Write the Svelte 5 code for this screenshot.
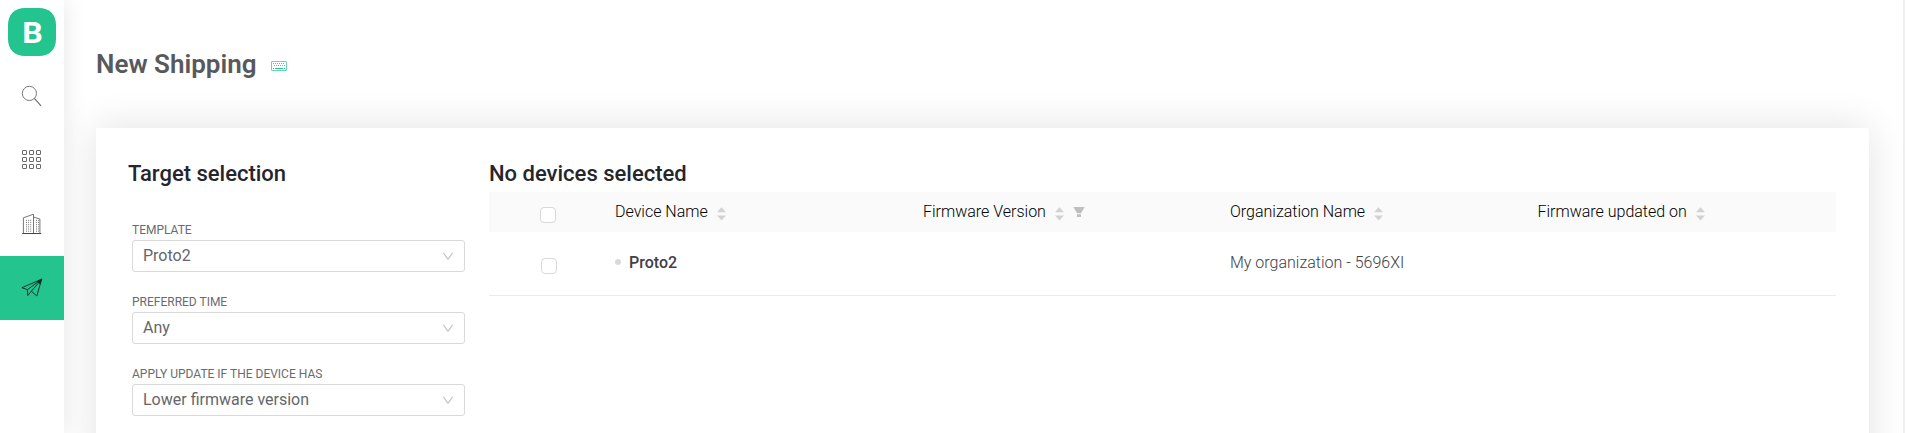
<script>
  const fields = [
    { label: 'TEMPLATE', value: 'Proto2' },
    { label: 'PREFERRED TIME', value: 'Any' },
    { label: 'APPLY UPDATE IF THE DEVICE HAS', value: 'Lower firmware version' }
  ];
  const columns = [
    { title: 'Device Name' },
    { title: 'Firmware Version', filter: true },
    { title: 'Organization Name' },
    { title: 'Firmware updated on' }
  ];
  const cells = [0, 1, 2];
  const windows = [0, 1, 2, 3, 4, 5];
</script>

<div class="page">
  <nav class="sidebar">
    <div class="item">
      <svg width="48" height="48" viewBox="0 0 48 48">
        <path d="M17 0H31C41.5 0 48 6.5 48 17V31C48 41.5 41.5 48 31 48H17C6.5 48 0 41.5 0 31V17C0 6.5 6.5 0 17 0Z" fill="#24c48e" />
        <text x="24.4" y="35.2" text-anchor="middle" textLength="20.5" lengthAdjust="spacingAndGlyphs" class="mark">B</text>
      </svg>
    </div>
    <div class="item">
      <svg width="22" height="22" viewBox="0 0 22 22" fill="none" stroke="#666" stroke-width=".9">
        <circle cx="8.4" cy="8.4" r="7.1" /><path d="M13.4 13.4 20 20.8" stroke-width="1.1" />
      </svg>
    </div>
    <div class="item">
      <svg width="20" height="20" viewBox="0 0 20 20" fill="none" stroke="#6a6a6a" stroke-width="1">
        {#each cells as r}{#each cells as c}
          <rect x={0.5 + c * 7} y={0.5 + r * 7} width="4" height="4" rx="0.4" />
        {/each}{/each}
      </svg>
    </div>
    <div class="item">
      <svg width="20" height="22" viewBox="0 0 20 22" fill="none" stroke="#666" stroke-width=".9">
        <path d="M1.4 20.5V4.8L11.5 1.2V20.5M11.5 4l6.4 2V20.5" />
        <path d="M.2 20.5H19.2" stroke-width="1" stroke="#444" />
        {#each windows as r}
          <path d="M4 {7.4 + r * 2.15}h5.5M14 {7.4 + r * 2.15}h3" stroke-dasharray="1 1.1" />
        {/each}
      </svg>
    </div>
    <div class="item active">
      <svg width="22" height="20" viewBox="0 0 22 20" fill="none" stroke="#12372b" stroke-width="1" stroke-linejoin="round">
        <path d="M20.7 1.2.9 9.7l5.5 2L20.7 1.2 15.8 18l-5.4-4.8L20.7 1.2M6.4 11.7l.4 5.8 3.6-4.3" />
        <path d="m20.9 1-4.7 2.4 2.7 2.1Z" fill="#0b211a" />
      </svg>
    </div>
  </nav>

  <main>
    <header>
      <h1>New Shipping</h1>
      <svg class="keyboard" width="16" height="10" viewBox="0 0 16 10" fill="none" stroke="#42c99d">
        <rect x=".5" y=".5" width="15" height="9" rx=".5" stroke-width=".8" />
        <path d="M2 2.5h12M3 4.5h11" stroke-dasharray="1 1" stroke-width="1" />
        <path d="M2 7.5h1M4 7.5h8M13 7.5h1" stroke-width="1" stroke="#2fbd8e" />
      </svg>
    </header>

    <section class="card">
      <aside>
        <h2>Target selection</h2>
        {#each fields as f}
          <div class="field">
            <div class="label">{f.label}</div>
            <div class="select">
              <span>{f.value}</span>
              <svg width="12" height="10" viewBox="0 0 12 10" fill="none" stroke="#c4c4c4" stroke-width="1.1"><path d="m1.3 1.8 4.7 6.4 4.7-6.4" /></svg>
            </div>
          </div>
        {/each}
      </aside>
      <div class="devices">
        <h2>No devices selected</h2>
        <div class="row head">
          <div class="check"><i></i></div>
          {#each columns as col}
            <div class="cell">
              <span>{col.title}</span>
              <svg class="sort" width="9" height="14" viewBox="0 0 9 14" fill="#d2d2d2"><path d="M0 5.2 4.5.2 9 5.2ZM0 8.5h9l-4.5 5Z" /></svg>
              {#if col.filter}
                <svg class="filter" width="12" height="11" viewBox="0 0 12 11" fill="#bfbfbf"><path d="M.4 0h11.2L8 6.2H4ZM4 7.2h4V10H4Z" /></svg>
              {/if}
            </div>
          {/each}
        </div>
        <div class="row body">
          <div class="check"><i></i></div>
          <div class="cell name"><b></b><strong>Proto2</strong></div>
          <div class="cell"></div>
          <div class="cell">My organization - 5696XI</div>
          <div class="cell"></div>
        </div>
      </div>
    </section>
  </main>
  <div class="edge"></div>
</div>

<style>
  :global(body) { background: #fff; overflow: hidden; }
  .page { display: flex; height: 433px; overflow: hidden; font: 300 16px/24px Roboto, sans-serif; color: #404145; }
  svg { display: block; flex: none; }
  .mark { font: 700 30px Roboto, sans-serif; fill: #fff; }
  .sidebar { width: 64px; flex: none; background: #fff; box-shadow: 0 0 24px rgba(0, 0, 0, .1); z-index: 1; }
  .item { height: 64px; display: flex; align-items: center; justify-content: center; }
  .active { background: #24c48e; }
  main { flex: 1; min-width: 0; padding: 0 34px 0 32px; }
  .edge { width: 2px; background: #f0f0f0; }
  header { height: 128px; display: flex; align-items: flex-start; }
  h1 { margin: 48px 0 0; width: 161px; white-space: nowrap; font-size: 26px; line-height: 32px; font-weight: 600; color: #58595d; }
  .keyboard { margin: 61px 0 0 14px; }
  .card { display: flex; height: 380px; background: #fff; border-radius: 2px; box-shadow: 0 0 40px rgba(0, 0, 0, .12); }
  h2 { margin: 0; font-size: 22px; line-height: 30px; font-weight: 500; color: #24262c; white-space: nowrap; }
  aside { width: 337px; padding: 31px 0 0 32px; margin-right: 24px; flex: none; }
  aside h2 { margin-bottom: 35px; }
  .field { margin-left: 4px; width: 333px; height: 72px; }
  .label { font-size: 12px; line-height: 13px; height: 16px; font-weight: 400; color: #6a6b70; }
  .select { height: 32px; box-sizing: border-box; border: 1px solid #d9d9d9; border-radius: 3px; display: flex; align-items: center; justify-content: space-between; padding: 0 10px; color: #65666b; font-weight: 400; }
  .devices { width: 1347px; padding-top: 31px; flex: none; }
  .devices h2 { height: 33px; }
  .row { display: grid; grid-template-columns: 126px 308px 307px 307.5px 1fr; }
  .head { height: 40px; background: #fafafa; color: #000; }
  .body { height: 63px; border-bottom: 1px solid #ebebeb; }
  .check { padding: 15px 0 0 51px; }
  .body .check { padding: 26px 0 0 52px; }
  .check i { display: block; width: 14px; height: 14px; border: 1px solid #d9d9d9; border-radius: 4px; background: #fff; }
  .cell { display: flex; align-items: flex-start; padding-top: 8px; }
  .body .cell { padding-top: 19px; }
  .sort { margin: 7px 0 0 9px; }
  .filter { margin: 7px 0 0 9px; }
  .name b { width: 6px; height: 6px; border-radius: 50%; background: #d9d9d9; margin: 8px 8px 0 0; }
  strong { font-weight: 500; }
</style>
